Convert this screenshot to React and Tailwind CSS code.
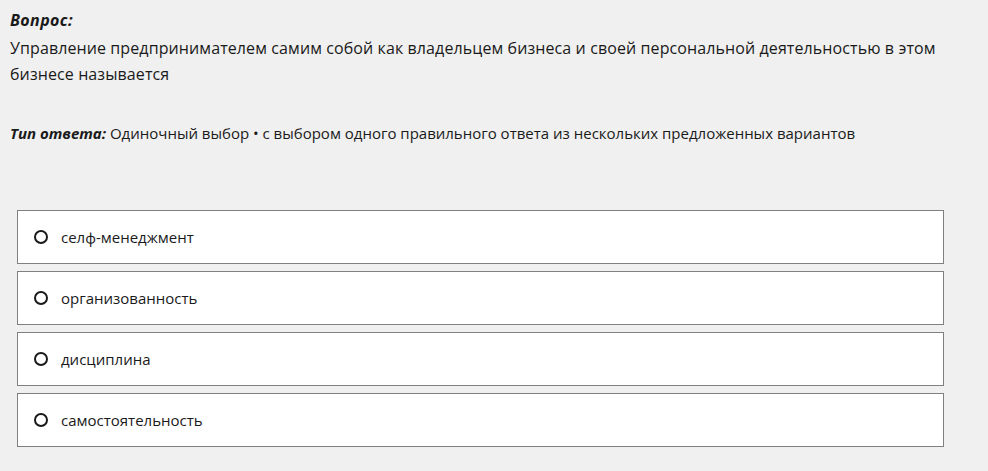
import React from 'react';

const options = ['селф-менеджмент', 'организованность', 'дисциплина', 'самостоятельность'];

export default function App() {
  return (
    <div className="min-h-[471px] w-full bg-[#f0f0f0] text-[#1a1a1a]" style={{ fontFamily: '"Open Sans", "Noto Sans", sans-serif' }}>
      <div className="px-[10px] pt-[9px]">
        {/* Question */}
        <div className="text-[16px] font-bold italic leading-[22px] tracking-[0.4px]">Вопрос:</div>
        <p className="mt-[4px] w-[950px] text-[16px] leading-[26px] tracking-[0.1px]">
          Управление предпринимателем самим собой как владельцем бизнеса и своей персональной деятельностью в этом бизнесе называется
        </p>

        {/* Answer type */}
        <p className="mt-[35px] text-[15px] leading-[22px]">
          <span className="font-bold italic">Тип ответа:</span> Одиночный выбор • с выбором одного правильного ответа из нескольких предложенных вариантов
        </p>
      </div>

      {/* Options */}
      <div className="mt-[66px] ml-[17px] flex w-[927px] flex-col gap-[7px]">
        {options.map((opt) => (
          <label key={opt} className="flex h-[54px] items-center border border-[#808080] bg-white pl-[16px]">
            <span className="h-[14px] w-[14px] rounded-full border-[2.5px] border-[#1a1a1a]" />
            <span className="ml-[13px] text-[15px]">{opt}</span>
          </label>
        ))}
      </div>
    </div>
  );
}
